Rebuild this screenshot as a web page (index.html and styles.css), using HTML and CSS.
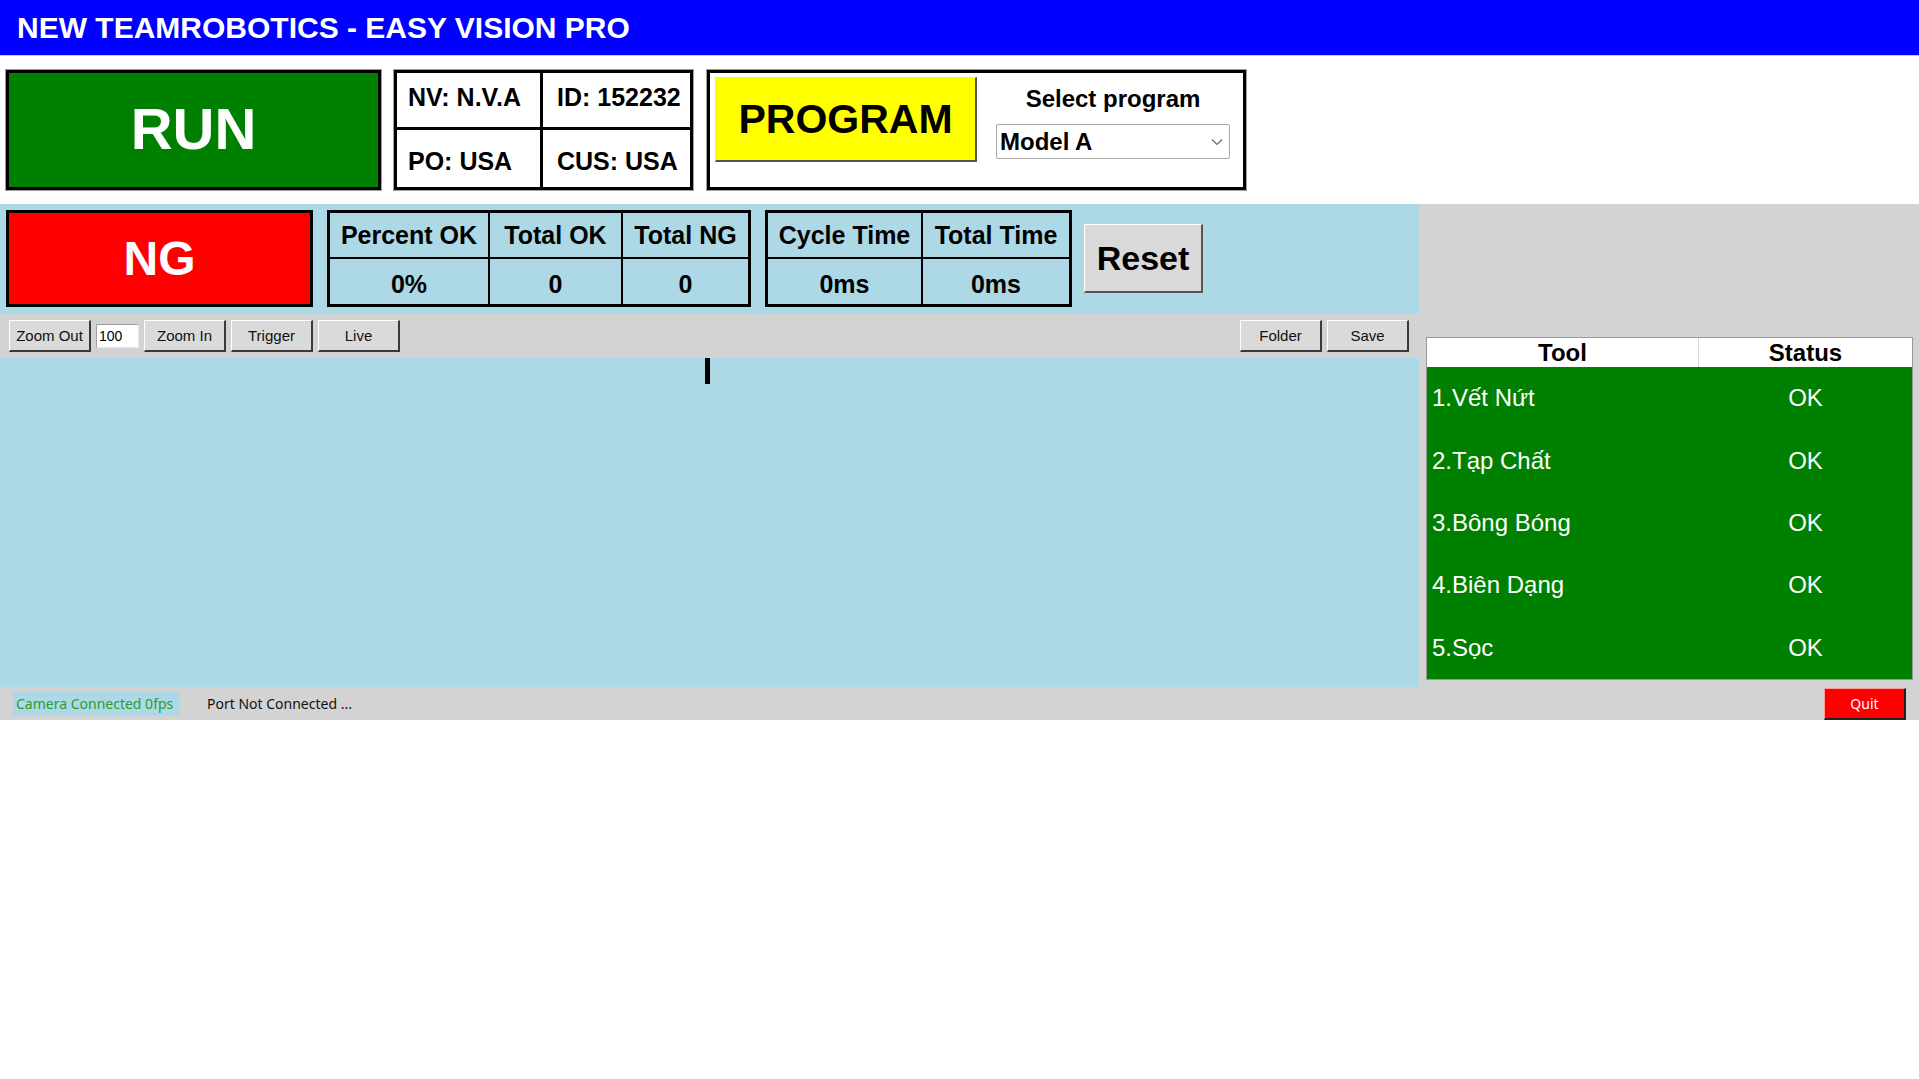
FILE: index.html
```html
<!DOCTYPE html>
<html>
<head>
<meta charset="utf-8">
<title>Easy Vision Pro</title>
<link rel="stylesheet" href="styles.css">
</head>
<body>
<div class="titlebar">NEW TEAMROBOTICS - EASY VISION PRO</div>
<div class="top-row">
  <div class="run-box">RUN</div>
  <div class="info-box">
    <div class="info-cell c-left r-top">NV: N.V.A</div>
    <div class="info-cell c-right r-top">ID: 152232</div>
    <div class="info-cell c-left r-bot">PO: USA</div>
    <div class="info-cell c-right r-bot">CUS: USA</div>
  </div>
  <div class="program-box">
    <div class="program-btn">PROGRAM</div>
    <div class="select-col">
      <div class="select-label">Select program</div>
      <div class="combo">
        <span class="combo-text">Model A</span>
        <svg class="chev" width="12" height="8" viewBox="0 0 12 8"><polyline points="1,1.5 6,6.5 11,1.5" fill="none" stroke="#6a6a6a" stroke-width="1.2"/></svg>
      </div>
    </div>
  </div>
</div>
<div class="main">
  <div class="left-col">
    <div class="stats-panel">
      <div class="ng-box">NG</div>
      <div class="stat-table t1">
        <div class="cell head">Percent OK</div>
        <div class="cell head">Total OK</div>
        <div class="cell head">Total NG</div>
        <div class="cell val">0%</div>
        <div class="cell val">0</div>
        <div class="cell val">0</div>
      </div>
      <div class="stat-table t2">
        <div class="cell head">Cycle Time</div>
        <div class="cell head">Total Time</div>
        <div class="cell val">0ms</div>
        <div class="cell val">0ms</div>
      </div>
      <div class="reset-btn">Reset</div>
    </div>
    <div class="toolbar">
      <div class="btn">Zoom Out</div>
      <div class="zoom-input">100</div>
      <div class="btn">Zoom In</div>
      <div class="btn">Trigger</div>
      <div class="btn">Live</div>
      <div class="spacer"></div>
      <div class="btn">Folder</div>
      <div class="btn">Save</div>
    </div>
    <div class="image-area">
      <div class="marker"></div>
    </div>
  </div>
  <div class="right-col">
    <div class="tool-table">
      <div class="tool-head">
        <div class="th th-tool">Tool</div>
        <div class="th th-status">Status</div>
      </div>
      <div class="tool-body">
        <div class="tool-row"><div class="tname">1.Vết Nứt</div><div class="tstat">OK</div></div>
        <div class="tool-row"><div class="tname">2.Tạp Chất</div><div class="tstat">OK</div></div>
        <div class="tool-row"><div class="tname">3.Bông Bóng</div><div class="tstat">OK</div></div>
        <div class="tool-row"><div class="tname">4.Biên Dạng</div><div class="tstat">OK</div></div>
        <div class="tool-row"><div class="tname">5.Sọc</div><div class="tstat">OK</div></div>
      </div>
    </div>
  </div>
</div>
<div class="statusbar">
  <div class="cam-label">Camera Connected 0fps</div>
  <div class="port-label">Port Not Connected ...</div>
  <div class="spacer"></div>
  <div class="quit-btn">Quit</div>
</div>
</body>
</html>
```
FILE: styles.css
```css
* { box-sizing: border-box; }
html, body { margin: 0; padding: 0; background: #ffffff; }
body {
  width: 1919px;
  font-family: "Liberation Sans", Arial, sans-serif;
  color: #000;
}
.titlebar {
  height: 56px;
  background: #0000ff;
  color: #fff;
  font-weight: bold;
  font-size: 30px;
  line-height: 55px;
  padding-left: 17px;
  border-bottom: 1px solid #c4c4f6;
}
.top-row {
  display: flex;
  align-items: flex-start;
  padding: 14px 0 14px 6px;
  height: 148px;
}
.run-box {
  width: 375px;
  height: 120px;
  background: #008000;
  border: 3px solid #000;
  box-shadow: 0 0 0 1px #a0a0a0;
  color: #fff;
  font-weight: bold;
  font-size: 58px;
  display: flex;
  align-items: center;
  justify-content: center;
  padding-bottom: 3px;
}
.info-box {
  margin-left: 13px;
  width: 299px;
  height: 120px;
  border: 3px solid #000;
  box-shadow: 0 0 0 1px #a0a0a0;
  background: #000;
  display: grid;
  grid-template-columns: 143px 1fr;
  grid-template-rows: 54px 1fr;
  gap: 3px;
}
.info-cell {
  background: #fff;
  font-weight: bold;
  font-size: 25px;
  display: flex;
  align-items: center;
}
.c-left { padding-left: 11px; }
.c-right { padding-left: 14px; }
.r-top { padding-bottom: 5px; }
.r-bot { padding-top: 5px; }
.program-box {
  margin-left: 14px;
  width: 539px;
  height: 120px;
  border: 3px solid #000;
  box-shadow: 0 0 0 1px #a0a0a0;
  display: flex;
  align-items: flex-start;
  padding: 4px 0 0 5px;
}
.program-btn {
  width: 262px;
  height: 85px;
  background: #ffff00;
  border-right: 2px solid #555;
  border-bottom: 2px solid #555;
  border-top: 1px solid #ddd;
  border-left: 1px solid #ddd;
  font-weight: bold;
  font-size: 41px;
  display: flex;
  align-items: center;
  justify-content: center;
}
.select-col {
  margin-left: 19px;
  margin-top: 4px;
  width: 234px;
  display: flex;
  flex-direction: column;
  align-items: center;
}
.select-label {
  font-weight: bold;
  font-size: 24px;
  height: 43px;
  line-height: 36px;
}
.combo {
  width: 234px;
  height: 35px;
  background: #fff;
  border: 1px solid #a8a8a8;
  border-radius: 2px;
  display: flex;
  align-items: center;
  padding: 0 6px 0 3px;
}
.combo-text {
  flex: 1;
  font-weight: bold;
  font-size: 24px;
}
.chev { display: block; }

.main {
  display: flex;
  height: 483px;
  background: #d3d3d3;
}
.left-col {
  width: 1419px;
  display: flex;
  flex-direction: column;
}
.stats-panel {
  height: 110px;
  background: #add8e6;
  display: flex;
  align-items: center;
  padding: 6px 6px 7px 6px;
}
.ng-box {
  width: 307px;
  height: 97px;
  background: #ff0000;
  border: 3px solid #000;
  color: #fff;
  font-weight: bold;
  font-size: 48px;
  display: flex;
  align-items: center;
  justify-content: center;
}
.stat-table {
  margin-left: 14px;
  height: 97px;
  border: 3px solid #000;
  background: #000;
  display: grid;
  grid-template-rows: 44px 1fr;
  gap: 2px;
}
.t1 { width: 424px; grid-template-columns: 158px 131px 1fr; }
.t2 { width: 307px; grid-template-columns: 153px 1fr; }
.cell {
  background: #add8e6;
  font-weight: bold;
  font-size: 25px;
  display: flex;
  align-items: center;
  justify-content: center;
}
.cell.val { padding-top: 5px; }
.reset-btn {
  margin-left: 12px;
  width: 119px;
  height: 69px;
  background: #d9d9d9;
  border-top: 1px solid #fff;
  border-left: 1px solid #fff;
  border-right: 2px solid #555;
  border-bottom: 2px solid #555;
  font-weight: bold;
  font-size: 34px;
  display: flex;
  align-items: center;
  justify-content: center;
}
.toolbar {
  height: 44px;
  display: flex;
  align-items: center;
  padding: 0 10px 0 9px;
  gap: 5px;
}
.btn {
  width: 82px;
  height: 32px;
  background: #dadada;
  border-top: 1px solid #fff;
  border-left: 1px solid #fff;
  border-right: 2px solid #3a3a3a;
  border-bottom: 2px solid #3a3a3a;
  font-size: 15px;
  display: flex;
  align-items: center;
  justify-content: center;
  color: #111;
}
.zoom-input {
  width: 43px;
  height: 24px;
  background: #fff;
  border-top: 1px solid #a0a0a0;
  border-left: 1px solid #a0a0a0;
  border-right: 1px solid #e8e8e8;
  border-bottom: 1px solid #e8e8e8;
  font-size: 14px;
  padding-left: 2px;
  display: flex;
  align-items: center;
}
.spacer { flex: 1; }
.image-area {
  flex: 1;
  background: #add8e6;
  position: relative;
}
.marker {
  position: absolute;
  left: 705px;
  top: 0;
  width: 5px;
  height: 26px;
  background: #000;
}
.right-col {
  flex: 1;
  padding: 133px 6px 0 7px;
}
.tool-table {
  border: 1px solid #9a9a9a;
  height: 343px;
  display: flex;
  flex-direction: column;
}
.tool-head {
  height: 29px;
  background: #fff;
  display: flex;
}
.th {
  font-weight: bold;
  font-size: 24px;
  display: flex;
  align-items: center;
  justify-content: center;
}
.th-tool { width: 272px; border-right: 1px solid #d8d8d8; }
.th-status { flex: 1; }
.tool-body {
  flex: 1;
  background: #008000;
  display: flex;
  flex-direction: column;
}
.tool-row {
  flex: 1;
  display: flex;
  align-items: center;
  color: #fff;
  font-size: 24px;
}
.tname { width: 272px; padding-left: 5px; }
.tstat { flex: 1; text-align: center; }

.statusbar {
  height: 33px;
  background: #d3d3d3;
  display: flex;
  align-items: center;
  padding: 0 13px 0 13px;
  font-family: "Noto Sans", "Open Sans", sans-serif;
  font-size: 14px;
}
.cam-label {
  background: #add8e6;
  color: #2f9a2f;
  height: 25px;
  width: 167px;
  display: flex;
  align-items: center;
  padding-left: 3px;
}
.port-label {
  margin-left: 27px;
  color: #111;
}
.quit-btn {
  width: 82px;
  height: 32px;
  background: #ff0000;
  color: #fff;
  border-top: 1px solid #ff9a9a;
  border-left: 1px solid #ff9a9a;
  border-right: 2px solid #222;
  border-bottom: 2px solid #222;
  display: flex;
  align-items: center;
  justify-content: center;
}
```
